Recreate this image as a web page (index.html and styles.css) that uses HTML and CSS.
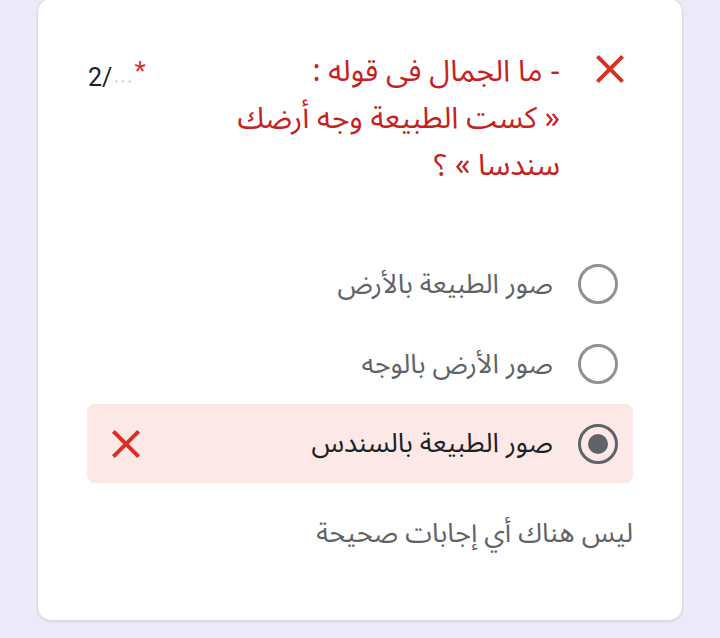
FILE: index.html
```html
<!DOCTYPE html>
<html lang="ar" dir="rtl">
<head>
<meta charset="utf-8">
<title>سؤال</title>
<link rel="stylesheet" href="styles.css">
</head>
<body>
<div class="card">
  <div class="header">
    <svg class="x-icon" viewBox="5 5 14 14" width="28" height="28" aria-hidden="true">
      <path d="M19 6.41L17.59 5 12 10.59 6.41 5 5 6.41 10.59 12 5 17.59 6.41 19 12 13.41 17.59 19 19 17.59 13.41 12z"/>
    </svg>
    <div class="title">- ما الجمال فى قوله :<br>« كست الطبيعة وجه أرضك<br>سندسا » ؟</div>
    <div class="score" dir="ltr">2/<span class="dots">...</span><span class="req">*</span></div>
  </div>
  <div class="options">
    <div class="option">
      <span class="radio"></span>
      <span class="label">صور الطبيعة بالأرض</span>
    </div>
    <div class="option">
      <span class="radio"></span>
      <span class="label">صور الأرض بالوجه</span>
    </div>
    <div class="option wrong">
      <span class="radio checked"></span>
      <span class="label">صور الطبيعة بالسندس</span>
      <svg class="x-icon small" viewBox="5 5 14 14" width="28" height="28" aria-hidden="true">
        <path d="M19 6.41L17.59 5 12 10.59 6.41 5 5 6.41 10.59 12 5 17.59 6.41 19 12 13.41 17.59 19 19 17.59 13.41 12z"/>
      </svg>
    </div>
  </div>
  <div class="feedback">ليس هناك أي إجابات صحيحة</div>
</div>
</body>
</html>
```

FILE: styles.css
```css
html, body {
  margin: 0;
  padding: 0;
}
body {
  background: #ece9f8;
  font-family: "Noto Sans Arabic", "Noto Sans Arabic UI", "Noto Naskh Arabic", "DejaVu Sans", sans-serif;
  width: 720px;
  height: 638px;
  overflow: hidden;
}
.card {
  box-sizing: border-box;
  margin: -2px 37px 0 37px;
  width: 646px;
  height: 623px;
  background: #ffffff;
  border: 1px solid #dadce0;
  border-radius: 14px;
  box-shadow: 0 1px 2px rgba(60, 64, 67, 0.12);
  padding: 0 49px;
}
.header {
  display: flex;
  align-items: flex-start;
  padding-top: 49px;
  padding-right: 9px;
}
.x-icon {
  flex: none;
  fill: #d93025;
  margin-top: 7px;
}
.title {
  flex: 1;
  margin-right: 36px;
  color: #c5221f;
  font-size: 30px;
  line-height: 47px;
}
.score {
  flex: none;
  font-family: Roboto, "Liberation Sans", sans-serif;
  font-size: 25px;
  line-height: 30px;
  color: #202124;
  margin-top: 8px;
  margin-left: 1px;
}
.dots {
  font-size: 14px;
  color: #9aa0a6;
  letter-spacing: 3px;
  vertical-align: 4px;
  margin-left: 2px;
}
.req {
  color: #d93025;
  font-size: 26px;
  vertical-align: 6px;
}
.options {
  margin-top: 55px;
  display: flex;
  flex-direction: column;
}
.option {
  display: flex;
  align-items: center;
  height: 80px;
  padding-right: 15px;
  padding-left: 25px;
  border-radius: 8px;
}
.option.wrong {
  background: #fce8e6;
  height: 79px;
}
.radio {
  box-sizing: border-box;
  flex: none;
  width: 40px;
  height: 40px;
  border: 3px solid #8e9296;
  border-radius: 50%;
  display: flex;
  align-items: center;
  justify-content: center;
}
.radio.checked {
  border-color: #5f6368;
}
.radio.checked::after {
  content: "";
  width: 20px;
  height: 20px;
  border-radius: 50%;
  background: #5f6368;
}
.label {
  flex: 1;
  margin-right: 25px;
  font-size: 27px;
  color: #5f6368;
}
.wrong .label {
  color: #202124;
}
.x-icon.small {
  margin-top: 0;
}
.feedback {
  margin-top: 32px;
  font-size: 27px;
  line-height: 38px;
  color: #5f6368;
}
```
